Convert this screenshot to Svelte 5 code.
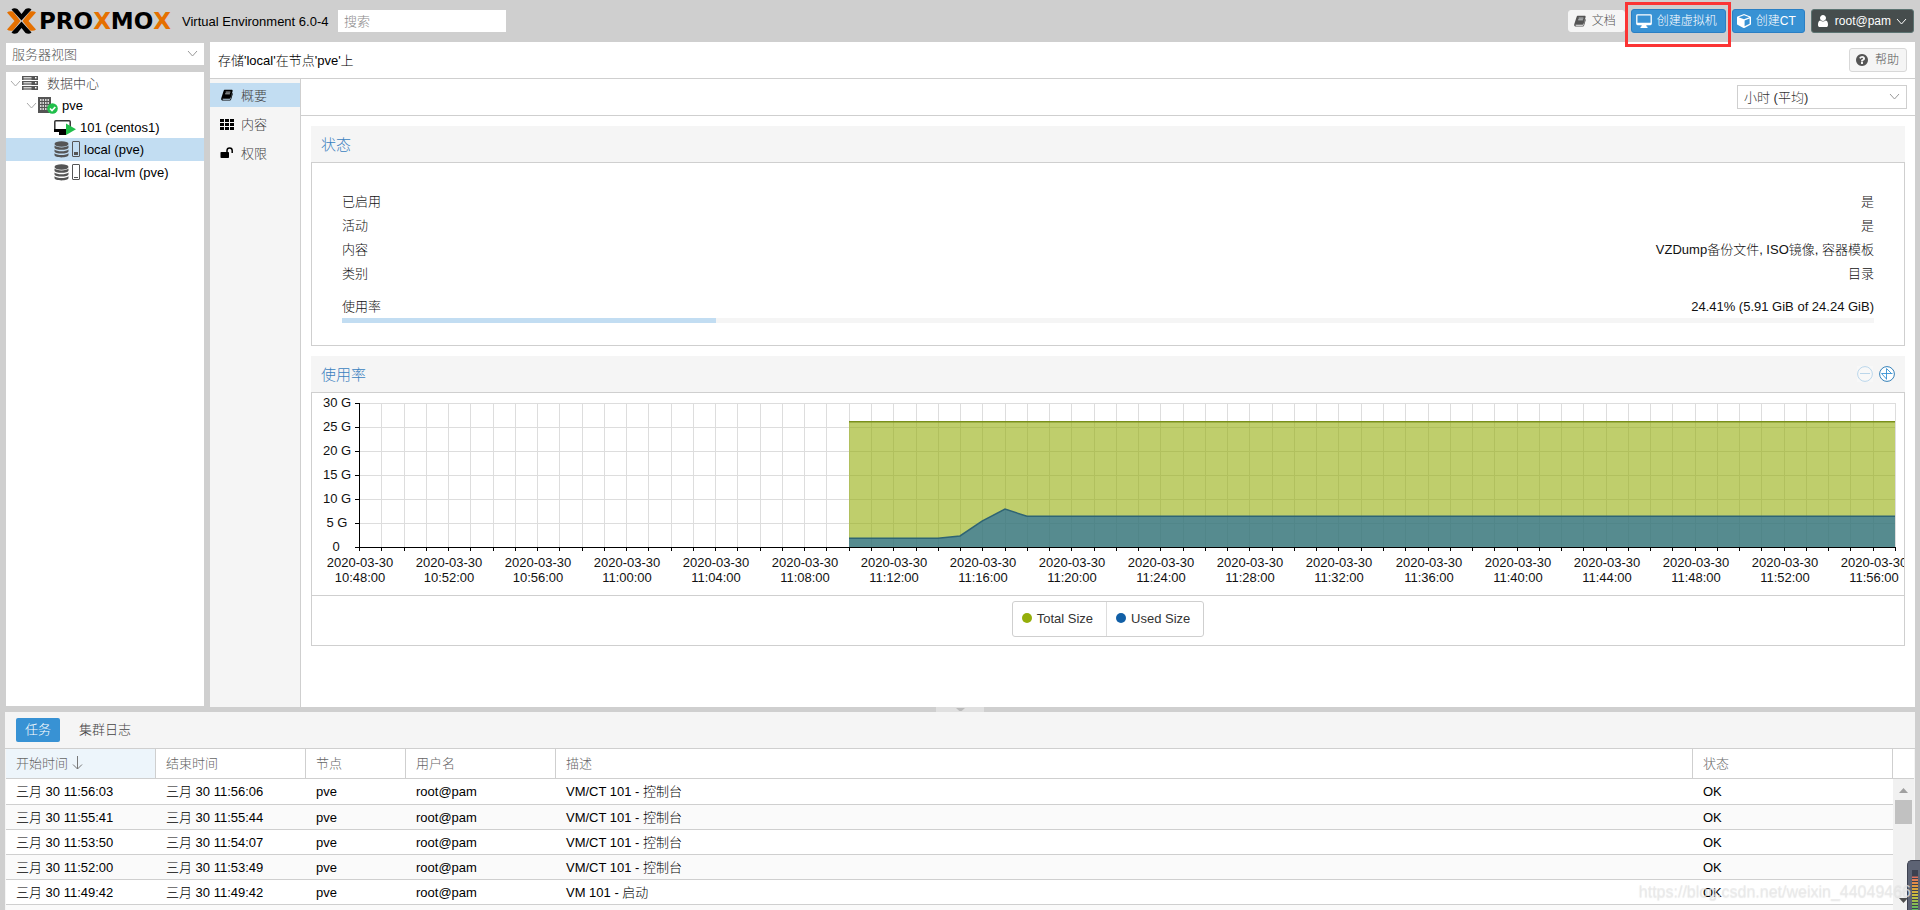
<script>
  let chartWidth = $state(1592);
  let search = $state('');
  let period = $state('hour');
  let view = $state('server');

  const menu = [
    { icon: 'book', label: '概要', active: true },
    { icon: 'grid', label: '内容', active: false },
    { icon: 'unlock', label: '权限', active: false }
  ];

  const status = [
    ['已启用', '是'],
    ['活动', '是'],
    ['内容', 'VZDump备份文件, ISO镜像, 容器模板'],
    ['类别', '目录']
  ];

  const usage = 24.41;

  const tasks = [
    ['三月 30 11:56:03', '三月 30 11:56:06', 'pve', 'root@pam', 'VM/CT 101 - 控制台', 'OK'],
    ['三月 30 11:55:41', '三月 30 11:55:44', 'pve', 'root@pam', 'VM/CT 101 - 控制台', 'OK'],
    ['三月 30 11:53:50', '三月 30 11:54:07', 'pve', 'root@pam', 'VM/CT 101 - 控制台', 'OK'],
    ['三月 30 11:52:00', '三月 30 11:53:49', 'pve', 'root@pam', 'VM/CT 101 - 控制台', 'OK'],
    ['三月 30 11:49:42', '三月 30 11:49:42', 'pve', 'root@pam', 'VM 101 - 启动', 'OK'],
    ['', '', '', '', '', '']
  ];

  // Chart geometry: one grid column per minute, one grid row per 5 G.
  const left = 47;
  const top = 10;
  const bottom = 154;
  const minutes = 69;
  const plotWidth = $derived(chartWidth - left - 9);
  const x = (m) => Math.round(left + (m * plotWidth) / minutes);
  const y = (g) => bottom - (g * (bottom - top)) / 30;

  const used = [
    [22, 1.8], [26, 1.8], [27, 2.3], [28, 5.4], [29, 7.9], [30, 6.4], [69, 6.4]
  ];
  const total = [[22, 26.1], [69, 26.1]];
  const line = (pts) => pts.map(([m, g]) => `${x(m)},${y(g)}`).join(' ');
  const area = (pts) => `${x(22)},${bottom} ${line(pts)} ${x(69)},${bottom}`;

  const columns = Array.from({ length: minutes + 1 }, (_, i) => i);
  const levels = [0, 5, 10, 15, 20, 25, 30];
  const labels = Array.from({ length: 18 }, (_, i) => i * 4).map((m) => {
    const t = 48 + m;
    const h = 10 + Math.floor(t / 60);
    return { m, time: `${h}:${String(t % 60).padStart(2, '0')}:00` };
  });
</script>

{#snippet chevron(cls)}
  <svg class={cls} width="11" height="11" viewBox="0 0 11 11" aria-hidden="true">
    <path d="M1 3l4.500 5L10 3" fill="none" stroke="currentColor" />
  </svg>
{/snippet}

{#snippet icon(name)}
  {#if name === 'book'}
    <svg width="14" height="12" viewBox="0 0 16 14" aria-hidden="true">
      <path d="M5.500 1h7.700c1 0 1.600.6 1.300 1.600L12.300 10c-.3 1-.9 1.400-1.800 1.400H3.300c-.7 0-.9.6-.2.900.2.100.4.100.6.100h7.500c.5 0 .8-.2.900-.6l1.900-6.800.9.300-2 6.700c-.3.700-.8 1.500-1.500 1.500H3.300C1.900 13.500.8 12.300 1.300 10.800L4 2.300C4.300 1.500 4.700 1 5.500 1z" fill="currentColor" />
      <path d="M6.500 3.600h5.500M5.900 5.600h5.500" stroke="#e8eef2" stroke-width="0.900" />
    </svg>
  {:else if name === 'grid'}
    <svg width="14" height="12" viewBox="0 0 14 12" aria-hidden="true">
      <path d="M0 1h4v3H0zM5 1h4v3H5zM10 1h4v3h-4zM0 5h4v3H0zM5 5h4v3H5zM10 5h4v3h-4zM0 9h4v3H0zM5 9h4v3H5zM10 9h4v3h-4z" fill="currentColor" />
    </svg>
  {:else if name === 'unlock'}
    <svg width="14" height="14" viewBox="0 0 14 14" aria-hidden="true">
      <rect x="0.500" y="6" width="8.500" height="6" rx="0.800" fill="currentColor" />
      <path d="M7 6.500V4.600a2.600 2.600 0 0 1 5.200 0V7" fill="none" stroke="currentColor" stroke-width="1.500" />
    </svg>
  {:else if name === 'desktop'}
    <svg width="16" height="14" viewBox="0 0 16 14" aria-hidden="true">
      <rect x="0.800" y="0.800" width="14.400" height="9.700" rx="0.800" fill="none" stroke="currentColor" stroke-width="1.300" />
      <path d="M1 8.700h14v2H1zM6 10.500h4l.8 2.200h.7V14h-7v-1.300h.7z" fill="currentColor" />
    </svg>
  {:else if name === 'cube'}
    <svg width="14" height="14" viewBox="0 0 14 14" aria-hidden="true">
      <path d="M7 0l6.300 2.400c.4.200.7.500.7.900v6.600c0 .4-.2.700-.5.900L7.400 13.900a1 1 0 0 1-.9 0L.5 10.800a1 1 0 0 1-.5-.9V3.300c0-.4.200-.7.600-.9zM7 1.300L1.700 3.300 7 5.300l5.300-2zM7.600 6.500v5.700l5-2.500V4.600z" fill="currentColor" fill-rule="evenodd" />
    </svg>
  {:else if name === 'user'}
    <svg width="14" height="14" viewBox="0 0 1792 1792" aria-hidden="true">
      <path fill="currentColor" d="M1536 1399q0 109-62.500 187t-150.500 78h-854q-88 0-150.500-78t-62.500-187q0-85 8.500-160.500t31.500-152 58.500-131 94-89 134.500-34.500q131 128 313 128t313-128q76 0 134.500 34.500t94 89 58.500 131 31.500 152 8.500 160.500zm-256-887q0 159-112.500 271.500t-271.500 112.500-271.500-112.500-112.500-271.500 112.500-271.500 271.500-112.500 271.500 112.500 112.500 271.500z" />
    </svg>
  {:else if name === 'help'}
    <svg width="12" height="12" viewBox="128 128 1536 1536" aria-hidden="true">
      <path fill="currentColor" d="M1024 1376v-192q0-14-9-23t-23-9h-192q-14 0-23 9t-9 23v192q0 14 9 23t23 9h192q14 0 23-9t9-23zm256-672q0-88-55.500-163t-138.500-116-170-41q-243 0-371 213-15 24 8 42l132 100q7 6 19 6 16 0 25-12 53-68 86-92 34-24 86-24 48 0 85.500 26t37.500 59q0 38-20 61t-68 45q-63 28-115.500 86.500t-52.500 125.500v36q0 14 9 23t23 9h192q14 0 23-9t9-23q0-19 21.500-49.500t54.500-49.500q32-18 49-28.500t46-35 44.500-48 28-60.500 12.500-81zm384 192q0 209-103 385.500t-279.500 279.500-385.500 103-385.500-103-279.500-279.500-103-385.500 103-385.500 279.500-279.500 385.500-103 385.500 103 279.500 279.500 103 385.500z" />
    </svg>
  {/if}
{/snippet}

{#snippet storage(fill)}
  <svg width="27" height="17" viewBox="0 0 27 17" aria-hidden="true">
    <g fill="#555">
      <ellipse cx="7.500" cy="3" rx="7" ry="2.700" />
      <path d="M.5 4.600c2 2.400 12 2.400 14 0v1.800C14.500 9.600.5 9.600.5 6.400zM.5 8.400c2 2.400 12 2.400 14 0v1.800c0 3.200-14 3.200-14 0zM.5 12.200c2 2.400 12 2.400 14 0V14c0 3.200-14 3.200-14 0z" />
    </g>
    <rect x="18.500" y="0.500" width="7" height="15" rx="0.500" fill="none" stroke="#555" />
    <rect x="20" y={14 - fill} width="4" height={fill} fill="#555" />
  </svg>
{/snippet}

<div class="app">
  <header>
    <div class="logo" aria-label="Proxmox">
      <svg width="29" height="26" viewBox="0 0 29 26" aria-hidden="true">
        <path d="M0 4.500Q2 2.800 6 3.500L13.500 13 6 22.500Q2 23.200 0 21.500L7.500 13zM29 4.500Q27 2.800 23 3.500L15.500 13 23 22.500Q27 23.200 29 21.500L21.500 13z" fill="#e57000" />
        <path d="M4.500 1.500Q7-.8 10.500 1l4 5 4-5Q22-.8 24.500 1.500L14.500 12.600zM4.500 24.500Q7 26.800 10.500 25l4-5 4 5Q22 26.800 24.500 24.500L14.500 13.400z" fill="#000" />
      </svg>
      <span class="wordmark">PRO<b>X</b>MO<b>X</b></span>
    </div>
    <span class="version">Virtual Environment 6.0-4</span>
    <input class="search" type="text" aria-label="搜索" placeholder="搜索" bind:value={search} />
    <div class="actions">
      <button class="btn docs">{@render icon('book')}<span>文档</span></button>
      <div class="marked">
        <button class="btn blue">{@render icon('desktop')}<span>创建虚拟机</span></button>
      </div>
      <button class="btn blue">{@render icon('cube')}<span>创建CT</span></button>
      <button class="btn dark">{@render icon('user')}<span>root@pam</span>{@render chevron('caret')}</button>
    </div>
  </header>

  <main>
    <nav class="side">
      <div class="combo">
        <select aria-label="视图" bind:value={view}>
          <option value="server">服务器视图</option>
        </select>
        {@render chevron('arrow')}
      </div>
      <ul class="tree">
        <li class="node level0">
          {@render chevron('expander')}
          <svg width="16" height="14" viewBox="0 0 16 14" aria-hidden="true">
            <path d="M0 0h16v4H0zM0 5h16v4H0zM0 10h16v4H0z" fill="#555" />
            <path d="M1.500 1.500h8M1.500 3h8M1.500 6.500h8M1.500 8h8M1.500 11.500h8M1.500 13h8" stroke="#ddd" stroke-width="0.900" />
            <path d="M13 1h1.500v1.500H13zM13 6h1.500v1.500H13zM13 11h1.500v1.500H13z" fill="#fff" />
          </svg>
          <span class="root">数据中心</span>
        </li>
        <li class="node level1">
          {@render chevron('expander')}
          <svg width="20" height="17" viewBox="0 0 20 17" aria-hidden="true">
            <path d="M0 0h13v16H0z" fill="#555" />
            <path d="M2 3h9M2 6h9M2 9h9M2 12h9" stroke="#fff" stroke-width="1.500" stroke-dasharray="1.500 1" />
            <circle cx="14.500" cy="11.500" r="5.300" fill="#21bf4b" />
            <path d="M12 11.500l2 2 3.300-3.500" fill="none" stroke="#fff" stroke-width="1.700" />
          </svg>
          <span>pve</span>
        </li>
        <li class="node level2">
          <svg width="22" height="16" viewBox="0 0 22 16" aria-hidden="true">
            <rect x="0.800" y="1.800" width="15.400" height="10" rx="1" fill="none" stroke="#333" stroke-width="1.500" />
            <path d="M0 10h13v3H0zM5 12h7v4H5z" fill="#000" />
            <path d="M12 4.500v11.500l10-5.700z" fill="#21bf4b" />
          </svg>
          <span class="guest">101 (centos1)</span>
        </li>
        <li class="node level2 store selected">{@render storage(3)}<span>local (pve)</span></li>
        <li class="node level2 store">{@render storage(1)}<span>local-lvm (pve)</span></li>
      </ul>
    </nav>

    <section class="content">
      <div class="titlebar">
        <span>存储'local'在节点'pve'上</span>
        <button class="btn help">{@render icon('help')}<span>帮助</span></button>
      </div>
      <div class="body">
        <ul class="menu">
          {#each menu as item}
            <li class:active={item.active}><a href="#{item.icon}">{@render icon(item.icon)}<span>{item.label}</span></a></li>
          {/each}
        </ul>
        <div class="panel">
          <div class="toolbar">
            <div class="combo period">
              <select aria-label="时间范围" bind:value={period}>
                <option value="hour">小时 (平均)</option>
              </select>
              {@render chevron('arrow')}
            </div>
          </div>
          <div class="cards">
            <section class="card">
              <h2>状态</h2>
              <div class="frame status">
                {#each status as [name, value]}
                  <div class="pair"><span>{name}</span><span>{value}</span></div>
                {/each}
                <div class="pair usage"><span>使用率</span><span>24.41% (5.91 GiB of 24.24 GiB)</span></div>
                <div class="bar"><div style:width="{usage}%"></div></div>
              </div>
            </section>
            <section class="card">
              <h2>
                使用率
                <span class="tools">
                  <svg class="faded" width="16" height="16" viewBox="0 0 16 16" aria-hidden="true">
                    <rect width="16" height="16" fill="#fff" />
                    <circle cx="8" cy="8" r="7.400" fill="none" stroke="#3892d4" />
                    <path d="M3 7.500h10" stroke="#3892d4" />
                  </svg>
                  <svg width="16" height="16" viewBox="0 0 16 16" aria-hidden="true">
                    <circle cx="8" cy="8" r="7.400" fill="#fff" stroke="#3580b8" />
                    <path d="M7.500 2.500v11M2.500 7.500h11M7.500 2.500l5 5M2.500 7.500l5 5.500" fill="none" stroke="#3892d4" stroke-width="0.900" />
                  </svg>
                </span>
              </h2>
              <div class="frame">
                <div class="chart" bind:clientWidth={chartWidth}>
                  <svg width={chartWidth} height="202" role="img" aria-label="使用率">
                    <g stroke="#ddd" shape-rendering="crispEdges">
                      {#each columns as m}<path d="M{x(m)} {top}V{bottom}" />{/each}
                      {#each levels as g}<path d="M{left} {y(g)}H{x(minutes)}" />{/each}
                    </g>
                    <polygon points={area(total)} fill="#94ae0a" fill-opacity="0.600" />
                    <polyline points={line(total)} fill="none" stroke="#7a8f1c" stroke-width="1.500" />
                    <polygon points={area(used)} fill="#115fa6" fill-opacity="0.600" />
                    <polyline points={line(used)} fill="none" stroke="#2f6474" stroke-width="1.500" />
                    <g stroke="#000" shape-rendering="crispEdges">
                      <path d="M{left} {top}V{bottom}H{x(minutes)}" fill="none" />
                      {#each columns as m}<path d="M{x(m)} {bottom}v4" />{/each}
                      {#each levels as g}<path d="M{left - 4} {y(g)}h4" />{/each}
                    </g>
                    {#each levels as g}
                      <text x={g === 0 ? 24 : 25} y={y(g) + 4}>{g === 0 ? '0' : `${g} G`}</text>
                    {/each}
                    {#each labels as l}
                      <text x={x(l.m) + 1} y="174">2020-03-30</text>
                      <text x={x(l.m) + 1} y="189">{l.time}</text>
                    {/each}
                  </svg>
                </div>
                <div class="legend">
                  <div>
                    <button><i class="total"></i>Total Size</button>
                    <button><i class="used"></i>Used Size</button>
                  </div>
                </div>
              </div>
            </section>
          </div>
        </div>
      </div>
    </section>
  </main>

  <div class="splitter">
    <span><svg width="9" height="3" viewBox="0 0 9 3" aria-hidden="true"><path d="M0 0h9L4.500 4z" fill="#bbb" /></svg></span>
  </div>

  <section class="log">
    <div class="tabs">
      <button class="tab on">任务</button>
      <button class="tab">集群日志</button>
    </div>
    <div class="grid">
      <table>
        <colgroup>
          <col class="c-time" /><col class="c-time" /><col class="c-node" /><col class="c-time" /><col /><col class="c-status" /><col class="c-gap" />
        </colgroup>
        <thead>
          <tr>
            <th class="sorted">
              开始时间<svg width="11" height="14" viewBox="0 0 11 14" aria-hidden="true"><path d="M5.500 0v13M1 8.500l4.500 4.500L10 8.500" fill="none" stroke="#777" /></svg>
            </th>
            <th>结束时间</th><th>节点</th><th>用户名</th><th>描述</th><th>状态</th><th></th>
          </tr>
        </thead>
        <tbody>
          {#each tasks as row}
            <tr>{#each row as cell}<td>{cell}</td>{/each}<td></td></tr>
          {/each}
        </tbody>
      </table>
      <div class="scroll">
        <svg width="9" height="5" viewBox="0 0 9 5" aria-hidden="true"><path d="M0 5h9L4.500 0z" fill="#a0a0a0" /></svg>
        <div class="thumb"></div>
        <svg class="down" width="9" height="5" viewBox="0 0 9 5" aria-hidden="true"><path d="M0 0h9L4.500 5z" fill="#505050" /></svg>
      </div>
    </div>
  </section>

  <div class="meter"><span></span></div>
  <div class="watermark">https://blog.csdn.net/weixin_44049466</div>
</div>

<style>
  :global(body) {
    margin: 0;
    overflow: hidden;
  }
  .app {
    position: relative;
    display: grid;
    grid-template-rows: 42px minmax(0, 1fr) 5px 198px;
    height: 100vh;
    overflow: hidden;
    background: #cfcfcf;
    color: #000;
    font: 300 13px/17px "Liberation Sans", "Noto Sans CJK SC", sans-serif;
  }
  .app :is(button, input, select) {
    font: inherit;
    color: inherit;
  }
  ul {
    list-style: none;
    margin: 0;
    padding: 0;
  }
  svg {
    flex: none;
    display: block;
  }

  header {
    display: flex;
    align-items: center;
    padding: 0 6px 0 7px;
  }
  .logo {
    display: flex;
    align-items: center;
    gap: 3px;
    width: 175px;
  }
  .wordmark {
    font: 700 23px/26px "DejaVu Sans", sans-serif;
  }
  .wordmark b {
    color: #e57000;
  }
  .version {
    width: 156px;
    white-space: nowrap;
  }
  .search {
    box-sizing: border-box;
    width: 168px;
    height: 22px;
    padding: 0 6px;
    border: 0;
    background: #fff;
  }
  .search::placeholder {
    color: #888;
  }
  .actions {
    display: flex;
    align-items: center;
    gap: 6px;
    margin-left: auto;
  }
  .app .btn {
    display: flex;
    align-items: center;
    gap: 5px;
    box-sizing: border-box;
    height: 24px;
    padding: 0 8px 0 4px;
    border: 1px solid #d8d8d8;
    border-radius: 3px;
    background: #f5f5f5;
    font-size: 12px;
    white-space: nowrap;
  }
  .app .btn.docs {
    height: 22px;
    border-color: #f5f5f5;
    color: #555;
  }
  .app .btn.help {
    gap: 7px;
    padding: 0 7px 0 6px;
    color: #555;
  }
  .app .btn.blue {
    border-color: #2a7fc4;
    background: #3892d4;
    color: #fff;
  }
  .app .btn.dark {
    padding-right: 6px;
    border-color: #5c7472;
    background: #464d4d;
    color: #fff;
  }
  .marked {
    position: relative;
  }
  .marked::after {
    content: "";
    position: absolute;
    inset: -7px -5px -14px -6px;
    border: 3px solid #fb3434;
  }

  main {
    display: grid;
    grid-template-columns: 198px minmax(0, 1fr);
    gap: 6px;
    padding: 0 5px 0 6px;
  }
  .side {
    display: flex;
    flex-direction: column;
    gap: 7px;
    padding: 1px 0;
  }
  .combo {
    position: relative;
    height: 22px;
    background: #fff;
    color: #555;
  }
  .combo select {
    appearance: none;
    width: 100%;
    height: 100%;
    padding: 0 24px 0 6px;
    border: 0;
    background: none;
  }
  .combo :global(.arrow) {
    position: absolute;
    right: 6px;
    top: 5px;
    color: #999;
    pointer-events: none;
  }
  .tree {
    flex: 1;
    background: #fff;
  }
  .node {
    display: flex;
    align-items: center;
    height: 22px;
  }
  .node :global(.expander) {
    margin-right: 1px;
    color: #aaa;
  }
  .level0 {
    padding-left: 4px;
    color: #444;
  }
  .level1 {
    padding-left: 20px;
  }
  .level1 span,
  .guest {
    margin-left: 4px;
  }
  .level2 {
    padding-left: 48px;
  }
  .root {
    margin-left: 9px;
  }
  .store {
    height: 23px;
    gap: 3px;
  }
  .selected {
    background: #c2ddf2;
  }

  .content {
    display: flex;
    flex-direction: column;
    background: #fff;
  }
  .titlebar {
    display: flex;
    align-items: center;
    justify-content: space-between;
    height: 36px;
    padding: 0 8px;
    border-bottom: 1px solid #cfcfcf;
  }
  .body {
    flex: 1;
    display: flex;
  }
  .menu {
    display: flex;
    flex-direction: column;
    gap: 5px;
    width: 90px;
    padding-top: 4px;
    border-right: 1px solid #cfcfcf;
    background: #f5f5f5;
  }
  .menu a {
    display: flex;
    align-items: center;
    gap: 7px;
    height: 24px;
    padding-left: 10px;
    color: #000;
    text-decoration: none;
  }
  .menu span {
    color: #444;
  }
  .active {
    background: #c2ddf2;
  }
  .panel {
    flex: 1;
    min-width: 0;
  }
  .toolbar {
    display: flex;
    align-items: center;
    justify-content: flex-end;
    height: 36px;
    padding-right: 8px;
    border-bottom: 1px solid #cfcfcf;
  }
  .period {
    width: 168px;
    border: 1px solid #cfcfcf;
    color: #333;
  }
  .cards {
    display: flex;
    flex-direction: column;
    gap: 10px;
    padding: 10px;
  }
  h2 {
    display: flex;
    align-items: center;
    justify-content: space-between;
    height: 36px;
    margin: 0;
    padding: 0 10px;
    background: #f5f5f5;
    color: #3a7fbf;
    font-size: 15px;
    font-weight: 300;
  }
  .tools {
    display: flex;
    gap: 6px;
  }
  .faded {
    opacity: 0.3;
  }
  .frame {
    border: 1px solid #cfcfcf;
  }
  .status {
    padding: 27px 30px 22px;
  }
  .pair {
    display: flex;
    justify-content: space-between;
    line-height: 24px;
  }
  .pair span {
    color: #111;
  }
  .usage {
    margin-top: 10px;
    line-height: 22px;
  }
  .bar {
    height: 5px;
    background: #f5f5f5;
  }
  .bar div {
    height: 100%;
    background: #c2ddf2;
  }
  .chart {
    height: 202px;
    overflow: hidden;
  }
  .chart text {
    font-size: 13px;
    text-anchor: middle;
    fill: #111;
  }
  .chart svg {
    overflow: hidden;
  }
  .legend {
    display: flex;
    justify-content: center;
    box-sizing: border-box;
    height: 50px;
    padding-top: 5px;
    border-top: 1px solid #cfcfcf;
  }
  .legend div {
    display: flex;
    height: 34px;
    border: 1px solid #cfcfcf;
    border-radius: 3px;
  }
  .legend button {
    display: flex;
    align-items: center;
    gap: 5px;
    padding: 0 13px 2px 9px;
    border: 0;
    background: none;
    color: #333;
  }
  .legend button + button {
    border-left: 1px solid #ddd;
  }
  .legend i {
    width: 10px;
    height: 10px;
    border-radius: 50%;
  }
  .total {
    background: #94ae0a;
  }
  .used {
    background: #115fa6;
  }

  .splitter {
    display: flex;
    justify-content: center;
  }
  .splitter span {
    display: flex;
    justify-content: center;
    align-items: center;
    width: 48px;
    background: #e0e0e0;
  }

  .log {
    display: flex;
    flex-direction: column;
    min-height: 0;
    margin: 0 5px;
    background: #f5f5f5;
  }
  .tabs {
    display: flex;
    align-items: center;
    gap: 10px;
    height: 36px;
    padding-left: 11px;
    border-bottom: 1px solid #cfcfcf;
  }
  .tab {
    height: 24px;
    padding: 0 9px 2px;
    border: 0;
    border-radius: 2px;
    background: none;
  }
  .app .tab {
    color: #444;
  }
  .app .tab.on {
    background: #3892d4;
    color: #fff;
  }
  .grid {
    position: relative;
    flex: 1;
    min-height: 0;
    margin: 0 1px;
    overflow: hidden;
    background: #fff;
  }
  table {
    width: 100%;
    table-layout: fixed;
    border-collapse: separate;
    border-spacing: 0;
  }
  .c-time {
    width: 150px;
  }
  .c-node {
    width: 100px;
  }
  .c-status {
    width: 200px;
  }
  .c-gap {
    width: 21px;
  }
  th,
  td {
    box-sizing: border-box;
    padding: 0 10px;
    border-bottom: 1px solid #cfcfcf;
    text-align: left;
    font-weight: 300;
    white-space: nowrap;
  }
  th {
    height: 30px;
    border-right: 1px solid #cfcfcf;
    color: #666;
  }
  th:last-child {
    border-right: 0;
  }
  th svg {
    display: inline-block;
    margin-left: 4px;
    vertical-align: -2px;
  }
  .sorted {
    background: #edf5fb;
  }
  td {
    height: 25px;
  }
  tbody tr:first-child td {
    height: 26px;
  }
  tbody tr:nth-child(even) {
    background: #fafafa;
  }
  .scroll {
    position: absolute;
    inset: 30px 0 0 auto;
    display: flex;
    flex-direction: column;
    align-items: center;
    box-sizing: border-box;
    width: 21px;
    padding: 9px 0 7px;
    background: #f1f1f1;
  }
  .thumb {
    width: 17px;
    height: 24px;
    margin-top: 7px;
    background: #c1c1c1;
  }
  .down {
    margin-top: auto;
  }

  .meter {
    position: absolute;
    right: 0;
    bottom: 0;
    display: flex;
    justify-content: flex-end;
    box-sizing: border-box;
    width: 13px;
    height: 50px;
    padding: 9px 2px 0 0;
    border: 1px solid #3d4150;
    border-width: 1px 0 0 1px;
    border-radius: 5px 0 0 0;
    background: #5d6374;
  }
  .meter span {
    width: 6px;
    background:
      repeating-linear-gradient(transparent 0 2px, #3d4150 2px 3px),
      linear-gradient(#3d4150 0 6px, #e07060 7px, #e09a40 16px, #c8c040 26px, #58b860 40px);
  }
  .watermark {
    position: absolute;
    right: 9px;
    bottom: 9px;
    color: rgba(232, 232, 232, 0.75);
    font-size: 16px;
    line-height: 18px;
    text-shadow: 0 1px 1px rgba(150, 150, 150, 0.2);
    pointer-events: none;
  }
</style>
